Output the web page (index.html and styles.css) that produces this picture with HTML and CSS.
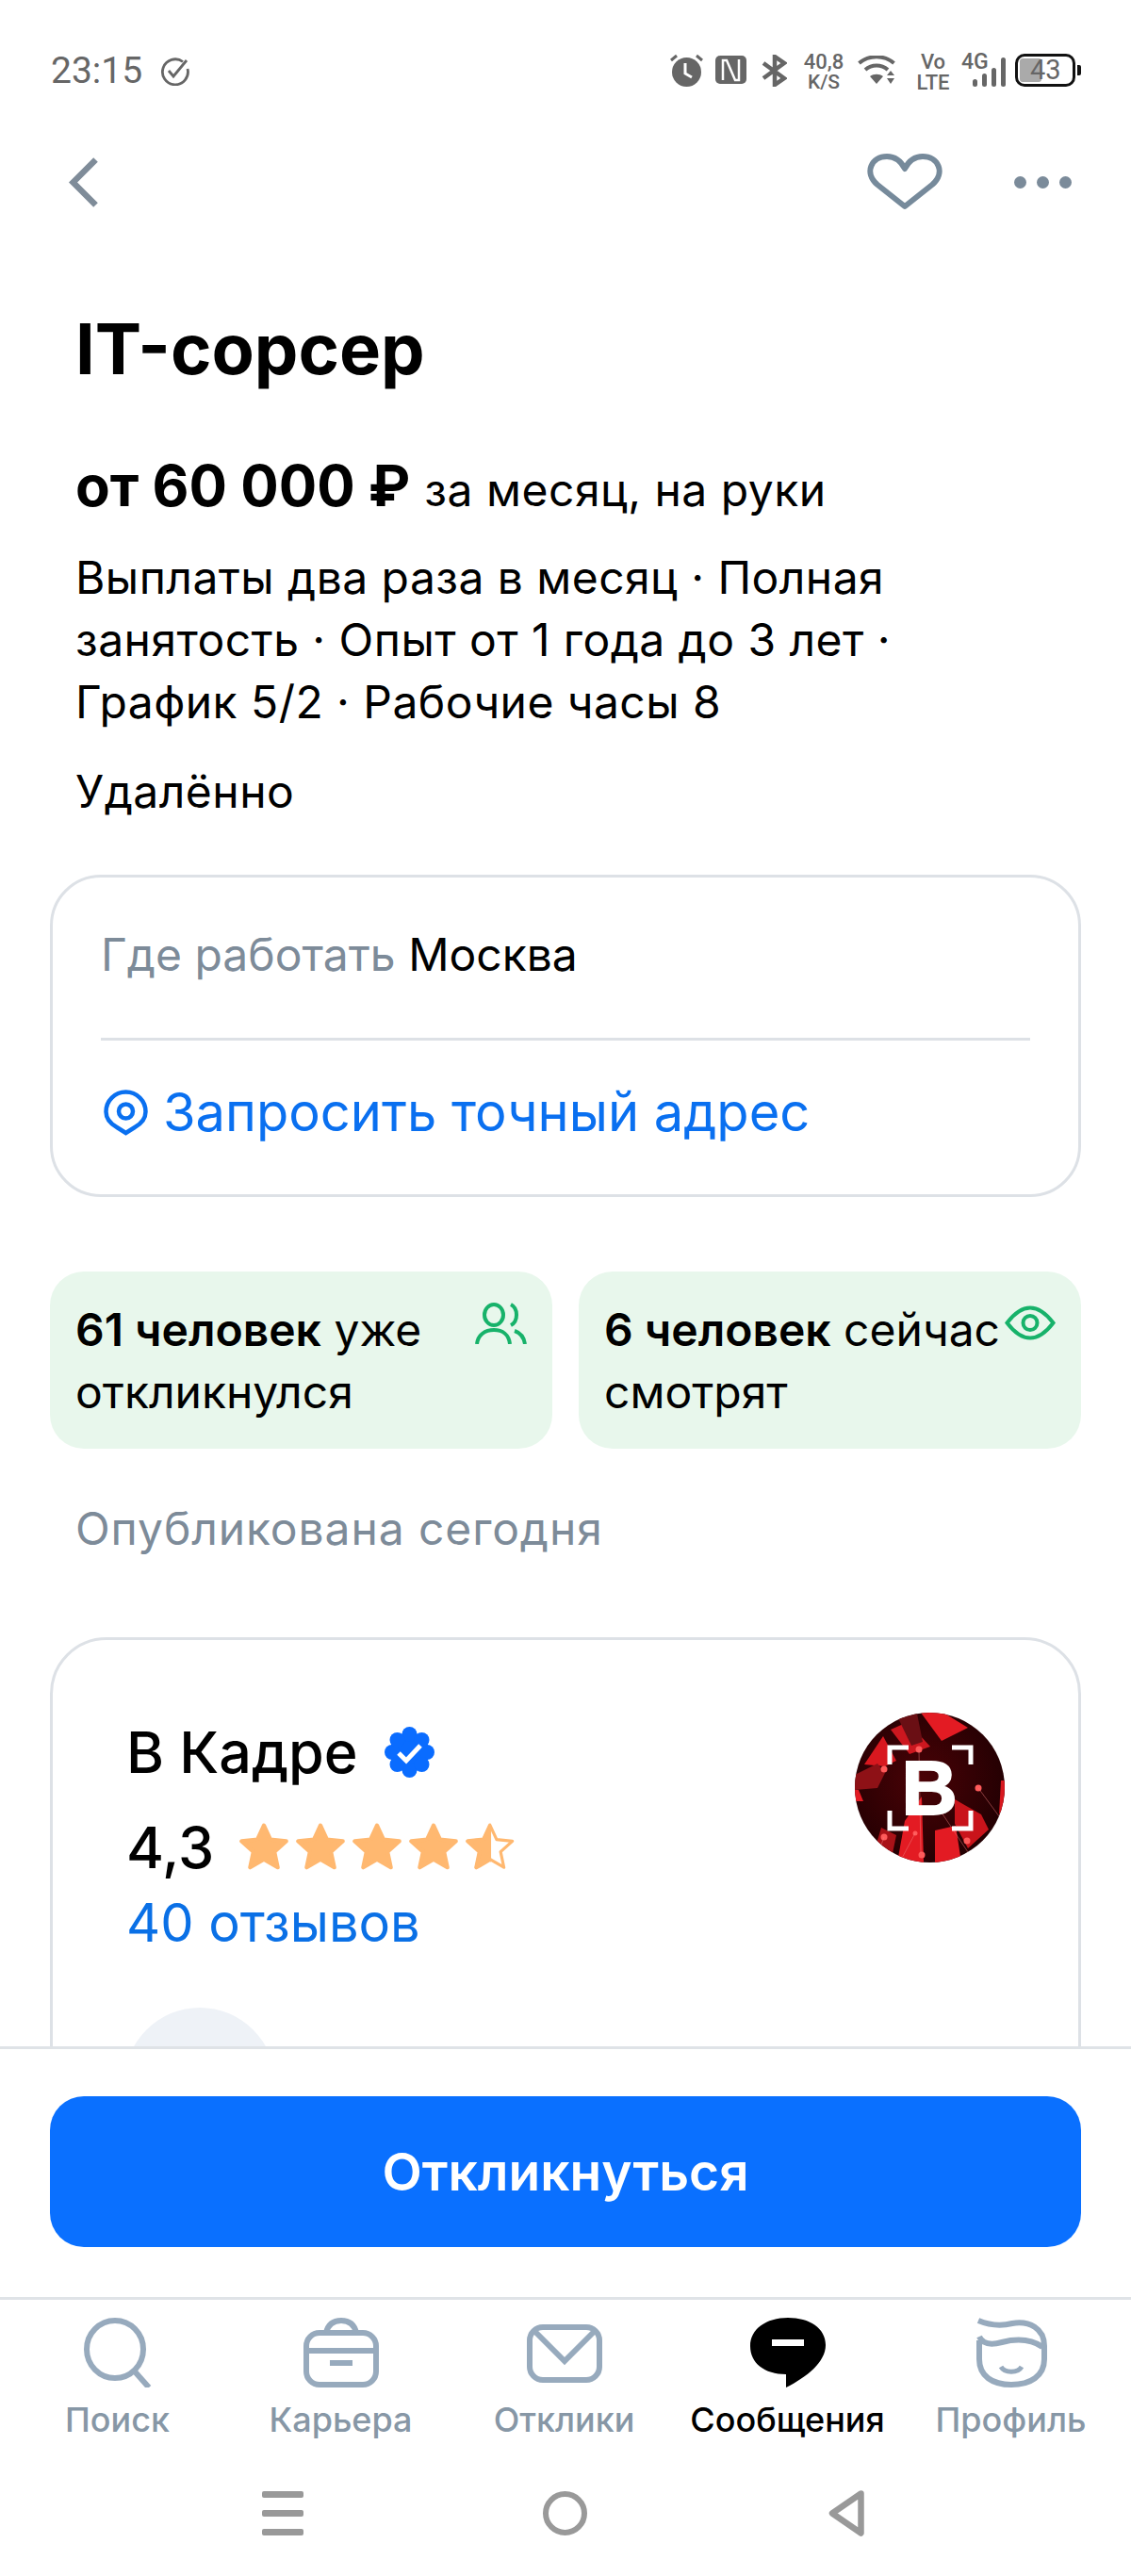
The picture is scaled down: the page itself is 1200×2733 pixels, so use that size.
FILE: index.html
```html
<!DOCTYPE html>
<html lang="ru">
<head>
<meta charset="utf-8">
<title>IT-сорсер</title>
<link rel="stylesheet" href="styles.css">
</head>
<body>
<svg class="defs" width="0" height="0" aria-hidden="true">
  <defs>
    <path id="star" d="M26 4L32.5 18.1 48.3 19.8 36.5 30.4 39.8 46 26 38 12.2 46 15.5 30.4 3.7 19.8 19.5 18.1Z"/>
    <clipPath id="halfstar"><rect x="0" y="0" width="27" height="52"/></clipPath>
  </defs>
</svg>
<div class="phone">
  <header class="status">
    <div class="status-left">
      <span class="time">23:15</span>
      <svg class="ic-done" viewBox="0 0 31 31"><path d="M24 5.500A13.500 13.500 0 1 0 29 13" fill="none" stroke="#666" stroke-width="2.800"/><path d="M9 15l5 6L28 4" fill="none" stroke="#666" stroke-width="2.800"/></svg>
    </div>
    <div class="status-right">
      <svg class="ic-alarm" viewBox="0 0 35 35"><circle cx="17.500" cy="19.500" r="15.500" fill="#666"/><path d="M16 10v11l7 4" fill="none" stroke="#fff" stroke-width="3"/><path d="M1 7l6-5M34 7l-6-5" stroke="#666" stroke-width="3" fill="none"/></svg>
      <svg class="ic-nfc" viewBox="0 0 33 30"><rect width="33" height="30" rx="5" fill="#666"/><path d="M8 26V5h4l9 21h4V4" fill="none" stroke="#fff" stroke-width="2.500"/></svg>
      <svg class="ic-bt" viewBox="0 0 27 34"><path d="M2 9l22 16-10 7V2l10 7L2 25" fill="none" stroke="#666" stroke-width="4.500"/></svg>
      <div class="speed"><span>40,8</span><span class="speed-unit">K/S</span></div>
      <svg class="ic-wifi" viewBox="0 0 40 31"><path d="M1.500 8C12-1 28-1 38.500 8M8 15c7-6 17-6 24 0" fill="none" stroke="#666" stroke-width="4"/><path d="M13 22c4-3 10-3 14 0l-7 8z" fill="#666"/><path d="M31 21l4-5 4 5zM31 24h8l-4 6z" fill="#666"/></svg>
      <div class="volte"><span>Vo</span><span>LTE</span></div>
      <div class="signal">
        <span class="net">4G</span>
        <svg class="ic-bars" viewBox="0 0 35 31"><rect x="0" y="23" width="5" height="8" rx="2.500" fill="#666"/><rect x="10" y="17" width="5" height="14" rx="2.500" fill="#666"/><rect x="20" y="11" width="5" height="20" rx="2.500" fill="#666"/><rect x="30" y="0" width="5" height="31" rx="2.500" fill="#666"/></svg>
      </div>
      <div class="battery"><span class="battery-fill"></span><span class="battery-num">43</span></div>
      <span class="battery-tip"></span>
    </div>
  </header>

  <nav class="topbar">
    <svg class="ic-back" viewBox="0 0 31 53"><path d="M28.500 2.500L4.500 26.500l24 24" fill="none" stroke="#7f8c99" stroke-width="6.500"/></svg>
    <svg class="ic-heart" viewBox="0 0 80 60"><path d="M40 56L11 33C-4 20 5 3 21 3c9 0 15 5 19 13 4-8 10-13 19-13 16 0 25 17 10 30z" fill="none" stroke="#768a9b" stroke-width="6" stroke-linejoin="round"/></svg>
    <div class="dots"><span></span><span></span><span></span></div>
  </nav>

  <main class="content">
    <h1 class="title">IT-сорсер</h1>
    <p class="salary"><b>от 60 000 ₽</b> <span>за месяц, на руки</span></p>
    <p class="meta">Выплаты два раза в месяц · Полная занятость · Опыт от 1 года до 3 лет · График 5/2 · Рабочие часы 8</p>
    <p class="remote">Удалённо</p>

    <section class="where">
      <p class="where-city"><span>Где работать</span> Москва</p>
      <div class="where-link">
        <svg class="ic-pin" viewBox="0 0 47 49"><path d="M23.500 46L14 40C6 35.500 2.500 30 2.500 23.500a21 21 0 1 1 42 0C44.500 30 41 35.500 33 40z" fill="none" stroke="#0a70f0" stroke-width="4.500"/><circle cx="23.500" cy="23" r="7.500" fill="none" stroke="#0a70f0" stroke-width="4.500"/></svg>
        <span>Запросить точный адрес</span>
      </div>
    </section>

    <section class="stats">
      <div class="stat">
        <p><b>61 человек</b> уже откликнулся</p>
        <svg class="ic-people" viewBox="0 0 55 44"><ellipse cx="20" cy="13" rx="10" ry="11" fill="none" stroke="#17b26a" stroke-width="4"/><path d="M38 2c8 4 8 18 0 22M2 44c1-10 9-15 18-15s16 5 17 15M42 30c6 2 10 7 11 14" fill="none" stroke="#17b26a" stroke-width="4"/></svg>
      </div>
      <div class="stat">
        <p><b>6 человек</b> сейчас смотрят</p>
        <svg class="ic-eye" viewBox="0 0 54 37"><path d="M2.500 18.500C12 6 20 2.500 27 2.500S42 6 51.500 18.500C42 31 34 34.500 27 34.500S12 31 2.500 18.500z" fill="none" stroke="#17b26a" stroke-width="4"/><circle cx="27" cy="18.500" r="7.500" fill="none" stroke="#17b26a" stroke-width="4"/></svg>
      </div>
    </section>

    <p class="published">Опубликована сегодня</p>

    <section class="company">
      <div class="company-info">
        <div class="company-name">
          <span>В Кадре</span>
          <svg class="ic-badge" viewBox="0 0 53 54"><g fill="#0a6cff"><circle cx="26.500" cy="27" r="21"/><circle cx="26.500" cy="8" r="8"/><circle cx="26.500" cy="46" r="8"/><circle cx="8" cy="27" r="8"/><circle cx="45" cy="27" r="8"/><circle cx="13.500" cy="14" r="8"/><circle cx="39.500" cy="14" r="8"/><circle cx="13.500" cy="40" r="8"/><circle cx="39.500" cy="40" r="8"/></g><path d="M15 28l8 8 15-16" fill="none" stroke="#fff" stroke-width="5"/></svg>
        </div>
        <div class="rating">
          <span class="rating-num">4,3</span>
          <div class="stars">
            <svg class="star" viewBox="1.500 1.500 49 49"><use href="#star"/></svg>
            <svg class="star" viewBox="1.500 1.500 49 49"><use href="#star"/></svg>
            <svg class="star" viewBox="1.500 1.500 49 49"><use href="#star"/></svg>
            <svg class="star" viewBox="1.500 1.500 49 49"><use href="#star"/></svg>
            <svg class="star star-half" viewBox="1.500 1.500 49 49"><use href="#star" class="star-line"/><use href="#star" clip-path="url(#halfstar)"/></svg>
          </div>
        </div>
        <a class="reviews">40 отзывов</a>
      </div>
      <svg class="logo" viewBox="0 0 159 159" role="img">
        <defs>
          <clipPath id="logoclip"><circle cx="79.500" cy="79.500" r="79.500"/></clipPath>
          <radialGradient id="logobg" cx="0.450" cy="0.450" r="0.650"><stop offset="0" stop-color="#4a0206"/><stop offset="1" stop-color="#1e0002"/></radialGradient>
        </defs>
        <g clip-path="url(#logoclip)">
          <rect width="159" height="159" fill="url(#logobg)"/>
          <path d="M70 0l24 0 26 16-28 14z" fill="#e31b23"/>
          <path d="M38 18l18-8 24 26-22 8z" fill="#dd1a22" opacity=".9"/>
          <path d="M46 6l20-5 6 30-12 4z" fill="#6a0f14"/>
          <path d="M10 55l20-30 14 26-12 6z" fill="#d8181f"/>
          <path d="M0 66l24-12 8 10-8 16-24 2z" fill="#8e1116"/>
          <path d="M0 82l4 0 5 12-9 0z" fill="#e31b23"/>
          <path d="M45 159l8-44 18-26 2 70z" fill="#e31b23"/>
          <path d="M85 125l22-5 6 39-28 0z" fill="#e31b23"/>
          <path d="M106 92l28 16 8 16-22 20-14-26z" fill="#c9141b"/>
          <path d="M28 122l16 8-6 29-18-10z" fill="#a91218"/>
          <path d="M155 72l4 0 0 28-6 8z" fill="#d8181f"/>
          <g fill="#ff5a5a"><circle cx="68" cy="39" r="3.500"/><circle cx="31" cy="60" r="3.500"/><circle cx="131" cy="80" r="3.500"/><circle cx="31" cy="132" r="3.500"/><circle cx="119" cy="136" r="3.500"/><circle cx="71" cy="151" r="3.500"/><circle cx="64" cy="128" r="2.500"/></g>
          <path d="M131 80l22 30M68 39l2 110M31 132l-8 22M64 128l-16 30M88 100l32 48" stroke="#f08080" stroke-width=".8" fill="none" opacity=".6"/>
          <path d="M37 55V37h20M103 37h20v18M37 104v19h20M103 123h20v-19" fill="none" stroke="#fff" stroke-width="5"/>
        </g>
        <text x="79" y="108" text-anchor="middle" class="logo-letter">В</text>
      </svg>
      <div class="avatar"></div>
    </section>
  </main>

  <section class="respond">
    <button class="respond-btn">Откликнуться</button>
  </section>

  <nav class="tabs">
    <div class="tab">
      <svg class="tab-ic" viewBox="0 0 80 74"><ellipse cx="37" cy="33.500" rx="30" ry="30.500" fill="none" stroke="#97aabd" stroke-width="6"/><path d="M57 56l16 18" fill="none" stroke="#97aabd" stroke-width="6"/></svg>
      <span>Поиск</span>
    </div>
    <div class="tab">
      <svg class="tab-ic" viewBox="0 0 80 74"><rect x="3" y="16" width="74" height="55" rx="14" fill="none" stroke="#97aabd" stroke-width="6"/><path d="M3 35h74M28 48h24" fill="none" stroke="#97aabd" stroke-width="6"/><path d="M24 16c2-9 8-13 16-13s14 4 16 13" fill="none" stroke="#97aabd" stroke-width="6"/></svg>
      <span>Карьера</span>
    </div>
    <div class="tab">
      <svg class="tab-ic" viewBox="0 0 80 74"><rect x="3" y="10" width="74" height="56" rx="14" fill="none" stroke="#97aabd" stroke-width="6"/><path d="M7 13l33 33 33-33" fill="none" stroke="#97aabd" stroke-width="6"/></svg>
      <span>Отклики</span>
    </div>
    <div class="tab tab-active">
      <svg class="tab-ic" viewBox="0 0 80 74"><path d="M40 0c23 0 40 11 40 29 0 18-20 34-42 45V60C15 60 0 48 0 30 0 12 17 0 40 0z" fill="#000"/><rect x="23" y="23" width="34" height="7" fill="#fff"/></svg>
      <span>Сообщения</span>
    </div>
    <div class="tab">
      <svg class="tab-ic" viewBox="0 0 80 74"><path d="M5 3c12 5 24 6 36 3 18-3 34 5 34 24v14c0 18-15 27-35 27S6 62 6 44V24M6 20c4 9 13 9 24 6 16-4 30-4 43 5" fill="none" stroke="#97aabd" stroke-width="6"/><path d="M29 52c4 7 18 7 22 0" fill="none" stroke="#97aabd" stroke-width="5"/></svg>
      <span>Профиль</span>
    </div>
  </nav>

  <footer class="sysnav">
    <div class="menu-ic"><span></span><span></span><span></span></div>
    <span class="home-ic"></span>
    <svg class="back-ic" viewBox="0 0 38 49"><path d="M34.500 3.500L4 24.500l30.500 21z" fill="none" stroke="#999" stroke-width="6.500" stroke-linejoin="round"/></svg>
  </footer>
</div>
</body>
</html>
```

FILE: styles.css
```css
* { box-sizing: border-box; }
html, body { margin: 0; padding: 0; background: #fff; }
body { font-family: "Inter", "Liberation Sans", sans-serif; color: #000; }
p, h1 { margin: 0; }
.defs { position: absolute; }
.phone { width: 1200px; height: 2733px; display: flex; flex-direction: column; overflow: hidden; background: #fff; }

.status { height: 113px; flex: none; display: flex; justify-content: space-between; padding: 55px 53px 0 54px; font-family: "Roboto", sans-serif; color: #666; align-items: flex-start; }
.status-left { display: flex; align-items: center; gap: 19px; padding-top: 1px; }
.time { font-size: 39px; line-height: 38px; }
.ic-done { width: 31px; height: 31px; }
.status-right { display: flex; align-items: flex-start; }
.ic-alarm { width: 35px; height: 35px; margin-top: 2px; }
.ic-nfc { width: 33px; height: 30px; margin: 4px 0 0 13px; }
.ic-bt { width: 27px; height: 34px; margin: 3px 0 0 16px; }
.speed, .volte { display: flex; flex-direction: column; align-items: center; font-size: 22px; line-height: 21px; font-weight: 500; }
.speed { width: 42px; margin-left: 18px; gap: 1px; }
.speed-unit { font-size: 21px; }
.ic-wifi { width: 40px; height: 31px; margin: 4px 0 0 15px; }
.volte { width: 32px; margin-left: 24px; font-size: 22px; gap: 1px; }
.signal { position: relative; width: 47px; height: 35px; margin-left: 14px; }
.net { position: absolute; left: 0; top: 0; font-size: 23px; line-height: 21px; font-weight: 500; }
.ic-bars { position: absolute; left: 12px; top: 6px; width: 35px; height: 31px; }
.battery { position: relative; width: 64px; height: 35px; margin: 2px 0 0 10px; border: 3px solid #111; border-radius: 10px; }
.battery-fill { position: absolute; left: 2px; top: 2px; width: 23px; height: 25px; background: #aaa; border-radius: 3px; }
.battery-num { position: absolute; left: 13px; top: -1px; font-size: 29px; line-height: 31px; color: #666; }
.battery-tip { width: 4px; height: 11px; margin: 14px 0 0 2px; background: #111; border-radius: 0 2px 2px 0; }

.topbar { height: 160px; flex: none; display: flex; align-items: center; padding: 0 63px 0 73px; }
.ic-back { width: 31px; height: 53px; }
.ic-heart { width: 80px; height: 60px; margin-left: auto; }
.dots { display: flex; gap: 11px; margin-left: 76px; }
.dots span { width: 13px; height: 13px; border-radius: 50%; background: #7b8b9a; }

.content { flex: 1; min-height: 0; overflow: hidden; padding: 0 53px; }
.title { font-size: 74px; line-height: 84px; font-weight: 700; margin: 55px 0 0 27px; }
.salary { margin: 67px 0 0 27px; font-size: 48px; line-height: 72px; white-space: nowrap; letter-spacing: .5px; }
.salary b { font-size: 60px; font-weight: 700; margin-right: 1px; letter-spacing: 0; }
.meta { margin: 24px 0 0 27px; font-size: 48px; line-height: 66px; width: 1040px; letter-spacing: .45px; }
.remote { margin: 29px 0 0 27px; font-size: 48px; line-height: 66px; letter-spacing: .5px; }

.where { margin-top: 55px; height: 342px; border: 3px solid #dde1e6; border-radius: 54px; padding: 0 51px; }
.where-city { height: 173px; padding-top: 49px; font-size: 48px; line-height: 66px; border-bottom: 3px solid #dde1e6; }
.where-city span { color: #7d8b99; }
.where-link { display: flex; align-items: center; gap: 16px; margin-top: 43px; color: #0a70f0; font-size: 56px; line-height: 66px; }
.ic-pin { width: 47px; height: 49px; flex: none; margin-left: 3px; }

.stats { display: grid; grid-template-columns: 1fr 1fr; gap: 28px; margin-top: 79px; }
.stat { position: relative; height: 188px; background: #e8f7ec; border-radius: 36px; padding: 29px 27px; font-size: 48px; line-height: 66px; }
.stat p { width: 440px; }
.stat b { font-weight: 600; }
.ic-people { position: absolute; left: 451px; top: 33px; width: 55px; height: 44px; }
.ic-eye { position: absolute; left: 452px; top: 36px; width: 54px; height: 37px; }
.published { margin: 52px 0 0 27px; color: #7d8b99; font-size: 48px; line-height: 66px; letter-spacing: .9px; }

.company { position: relative; margin-top: 82px; height: 700px; border: 3px solid #dde1e6; border-radius: 60px; display: flex; justify-content: space-between; align-items: flex-start; padding: 77px 78px 0 78px; }
.company-name { display: flex; align-items: center; gap: 28px; font-size: 61px; line-height: 84px; font-weight: 500; }
.ic-badge { width: 53px; height: 54px; }
.rating { display: flex; align-items: center; gap: 27px; margin-top: 23px; }
.rating-num { font-size: 61px; line-height: 72px; font-weight: 500; }
.stars { display: flex; gap: 8px; }
.star { width: 52px; height: 52px; fill: #ffb870; stroke: #ffb870; stroke-width: 4; stroke-linejoin: round; }
.star-half .star-line { fill: none; stroke-width: 3; }
.reviews { display: block; color: #0a70e6; font-size: 56px; line-height: 66px; margin-top: 11px; }
.logo { width: 159px; height: 159px; flex: none; margin-top: 0; }
.logo-letter { font-family: "Liberation Sans", sans-serif; font-size: 82px; font-weight: 700; fill: #fff; stroke: #fff; stroke-width: 2; }
.avatar { position: absolute; left: 76px; top: 390px; width: 160px; height: 160px; border-radius: 50%; background: #eef2f7; }

.respond { flex: none; height: 266px; border-top: 3px solid #dfe3e7; background: #fff; padding: 50px 53px 0; }
.respond-btn { display: block; width: 100%; height: 160px; border: 0; border-radius: 36px; background: #0a70ff; color: #fff; font: 600 55px/66px "Inter", "Liberation Sans", sans-serif; }

.tabs { flex: none; height: 195px; border-top: 3px solid #dfe3e7; display: grid; grid-template-columns: repeat(5, 237px); padding: 19px 0 0 6px; }
.tab { display: flex; flex-direction: column; align-items: center; color: #8797a6; font-size: 36px; line-height: 40px; font-weight: 500; }
.tab-ic { width: 80px; height: 74px; margin-bottom: 14px; }
.tab-active { color: #000; }

.sysnav { flex: none; height: 101px; display: flex; align-items: flex-start; padding: 11px 0 0 278px; }
.menu-ic { display: flex; flex-direction: column; gap: 13px; width: 44px; }
.menu-ic span { height: 7px; background: #999; border-radius: 2px; }
.home-ic { width: 47px; height: 47px; margin-left: 254px; border: 6.500px solid #999; border-radius: 50%; }
.back-ic { width: 38px; height: 49px; margin: -1px 0 0 256px; }
```
